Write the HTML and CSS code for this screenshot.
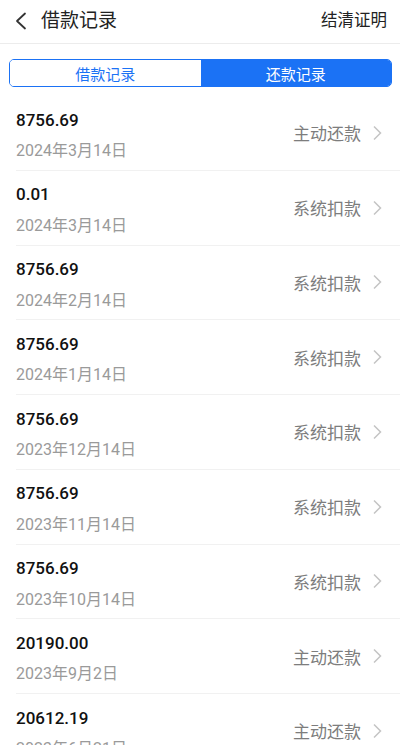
FILE: index.html
```html
<!DOCTYPE html>
<html lang="zh">
<head>
<meta charset="utf-8">
<link rel="stylesheet" href="styles.css">
</head>
<body>
<header class="topbar">
  <div class="left">
    <svg class="back" width="14" height="18" viewBox="0 0 14 18"><path d="M11 1.5 L3 9 L11 16.5" fill="none" stroke="#333" stroke-width="1.8" stroke-linecap="round" stroke-linejoin="round"/></svg>
    <span class="title">借款记录</span>
  </div>
  <span class="action">结清证明</span>
</header>
<div class="seg">
  <div class="seg-item">借款记录</div>
  <div class="seg-item active">还款记录</div>
</div>
<ul class="list">
  <li class="row"><div class="info"><div class="amt">8756.69</div><div class="date">2024年3月14日</div></div><div class="type">主动还款<svg class="chev" width="10" height="16" viewBox="0 0 10 16"><path d="M2 1.5 L8.5 8 L2 14.5" fill="none" stroke="#c4c4c4" stroke-width="1.5"/></svg></div></li>
  <li class="row"><div class="info"><div class="amt">0.01</div><div class="date">2024年3月14日</div></div><div class="type">系统扣款<svg class="chev" width="10" height="16" viewBox="0 0 10 16"><path d="M2 1.5 L8.5 8 L2 14.5" fill="none" stroke="#c4c4c4" stroke-width="1.5"/></svg></div></li>
  <li class="row"><div class="info"><div class="amt">8756.69</div><div class="date">2024年2月14日</div></div><div class="type">系统扣款<svg class="chev" width="10" height="16" viewBox="0 0 10 16"><path d="M2 1.5 L8.5 8 L2 14.5" fill="none" stroke="#c4c4c4" stroke-width="1.5"/></svg></div></li>
  <li class="row"><div class="info"><div class="amt">8756.69</div><div class="date">2024年1月14日</div></div><div class="type">系统扣款<svg class="chev" width="10" height="16" viewBox="0 0 10 16"><path d="M2 1.5 L8.5 8 L2 14.5" fill="none" stroke="#c4c4c4" stroke-width="1.5"/></svg></div></li>
  <li class="row"><div class="info"><div class="amt">8756.69</div><div class="date">2023年12月14日</div></div><div class="type">系统扣款<svg class="chev" width="10" height="16" viewBox="0 0 10 16"><path d="M2 1.5 L8.5 8 L2 14.5" fill="none" stroke="#c4c4c4" stroke-width="1.5"/></svg></div></li>
  <li class="row"><div class="info"><div class="amt">8756.69</div><div class="date">2023年11月14日</div></div><div class="type">系统扣款<svg class="chev" width="10" height="16" viewBox="0 0 10 16"><path d="M2 1.5 L8.5 8 L2 14.5" fill="none" stroke="#c4c4c4" stroke-width="1.5"/></svg></div></li>
  <li class="row"><div class="info"><div class="amt">8756.69</div><div class="date">2023年10月14日</div></div><div class="type">系统扣款<svg class="chev" width="10" height="16" viewBox="0 0 10 16"><path d="M2 1.5 L8.5 8 L2 14.5" fill="none" stroke="#c4c4c4" stroke-width="1.5"/></svg></div></li>
  <li class="row"><div class="info"><div class="amt">20190.00</div><div class="date">2023年9月2日</div></div><div class="type">主动还款<svg class="chev" width="10" height="16" viewBox="0 0 10 16"><path d="M2 1.5 L8.5 8 L2 14.5" fill="none" stroke="#c4c4c4" stroke-width="1.5"/></svg></div></li>
  <li class="row"><div class="info"><div class="amt">20612.19</div><div class="date">2023年6月21日</div></div><div class="type">主动还款<svg class="chev" width="10" height="16" viewBox="0 0 10 16"><path d="M2 1.5 L8.5 8 L2 14.5" fill="none" stroke="#c4c4c4" stroke-width="1.5"/></svg></div></li>
</ul>
</body>
</html>
```
FILE: styles.css
```css
* { box-sizing: border-box; }
html, body { margin: 0; padding: 0; background: #fff; }
body {
  width: 400px;
  height: 745px;
  overflow: hidden;
  font-family: Roboto, "Noto Sans CJK SC", sans-serif;
  color: #111;
}
.topbar {
  height: 44px;
  border-bottom: 1px solid #ececec;
  display: flex;
  align-items: center;
  justify-content: space-between;
  padding: 0 13px 2px 14px;
}
.left { display: flex; align-items: center; }
.back { display: block; margin-right: 13px; }
.title { font-size: 19px; color: #222; line-height: 24px; }
.action { font-size: 16.5px; color: #222; line-height: 24px; }
.seg {
  margin: 15px 8px 0 9px;
  height: 28px;
  border: 1px solid #1b72f5;
  border-radius: 5px;
  display: flex;
  overflow: hidden;
}
.seg-item {
  flex: 1;
  display: flex;
  align-items: center;
  justify-content: center;
  font-size: 15px;
  color: #1b72f5;
  background: #fff;
}
.seg-item.active { background: #1b72f5; color: #fff; }
.list { list-style: none; margin: 9px 0 0 16px; padding: 0; }
.row {
  height: 74.75px;
  border-bottom: 1px solid #f1f1f1;
  display: flex;
  align-items: center;
  justify-content: space-between;
  padding: 0 18px 0 0;
}
.info { display: flex; flex-direction: column; gap: 7.5px; margin-top: 5px; }
.amt { font-size: 17px; font-weight: 500; line-height: 24px; color: #111; }
.date { font-size: 16px; line-height: 24px; color: #9a9a9a; }
.type {
  display: flex;
  align-items: center;
  font-size: 17px;
  color: #7d7d7d;
}
.chev { display: block; margin-left: 11px; }
```
